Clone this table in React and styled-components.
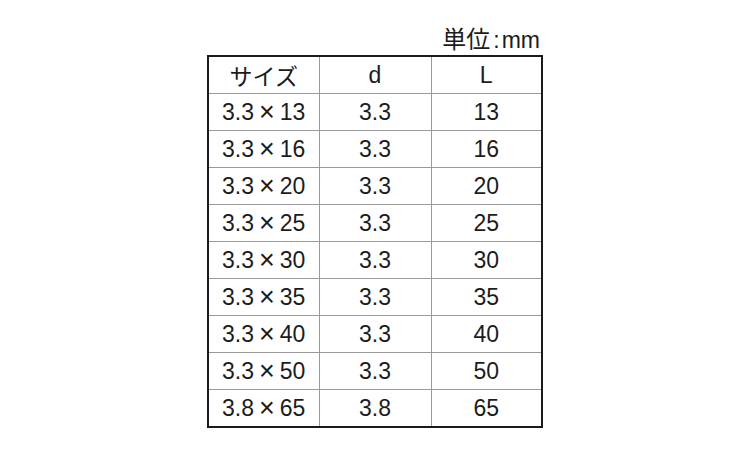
import React from 'react';
import styled, { createGlobalStyle } from 'styled-components';

const GlobalStyle = createGlobalStyle`
  html, body {
    margin: 0;
    padding: 0;
    background: #fff;
  }
  body {
    font-family: 'Liberation Sans', 'Noto Sans CJK JP', sans-serif;
    color: #1c1c1c;
  }
`;

const Page = styled.div`
  width: 750px;
  height: 450px;
  padding: 24px 0 0 207px;
  box-sizing: border-box;
`;

const Block = styled.div`
  width: 334px;
  display: flex;
  flex-direction: column;
`;

const Unit = styled.div`
  align-self: flex-end;
  display: flex;
  align-items: baseline;
  height: 31px;
  margin-right: 1px;
  font-family: 'Noto Sans CJK JP', sans-serif;
  font-size: 24px;
  line-height: 28px;
`;

const UnitLatin = styled.span`
  font-family: 'Liberation Sans', sans-serif;
  font-size: 23px;
  margin-left: ${(p) => p.$gap || 0}px;
`;

const Table = styled.table`
  width: 334px;
  border-collapse: collapse;
  border: 2px solid #1a1a1a;
  table-layout: fixed;
`;

const Th = styled.th`
  height: 36px;
  padding: 0;
  border: 1px solid #9a9a9a;
  font-weight: normal;
  font-size: 23px;
  font-family: ${(p) =>
    p.$jp ? "'Noto Sans CJK JP', sans-serif" : "'Liberation Sans', sans-serif"};
  text-align: center;
  vertical-align: middle;
`;

const Td = styled.td`
  height: 36px;
  padding: 0;
  border: 1px solid #9a9a9a;
  font-size: 23px;
  text-align: center;
  vertical-align: middle;
`;

const Times = styled.span`
  display: inline-block;
  font-size: 27px;
  line-height: 1;
  margin: 0 5px;
  vertical-align: -1px;
`;

const rows = [
  ['3.3', '13'],
  ['3.3', '16'],
  ['3.3', '20'],
  ['3.3', '25'],
  ['3.3', '30'],
  ['3.3', '35'],
  ['3.3', '40'],
  ['3.3', '50'],
  ['3.8', '65'],
];

export default function App() {
  return (
    <>
      <GlobalStyle />
      <Page>
        <Block>
          <Unit>
            単位<UnitLatin $gap={3}>:</UnitLatin>
            <UnitLatin $gap={2}>mm</UnitLatin>
          </Unit>
          <Table>
            <colgroup>
              <col style={{ width: 111 }} />
              <col style={{ width: 112 }} />
              <col style={{ width: 111 }} />
            </colgroup>
            <thead>
              <tr>
                <Th $jp>サイズ</Th>
                <Th>d</Th>
                <Th>L</Th>
              </tr>
            </thead>
            <tbody>
              {rows.map(([d, l]) => (
                <tr key={d + l}>
                  <Td>
                    {d}
                    <Times>×</Times>
                    {l}
                  </Td>
                  <Td>{d}</Td>
                  <Td>{l}</Td>
                </tr>
              ))}
            </tbody>
          </Table>
        </Block>
      </Page>
    </>
  );
}
